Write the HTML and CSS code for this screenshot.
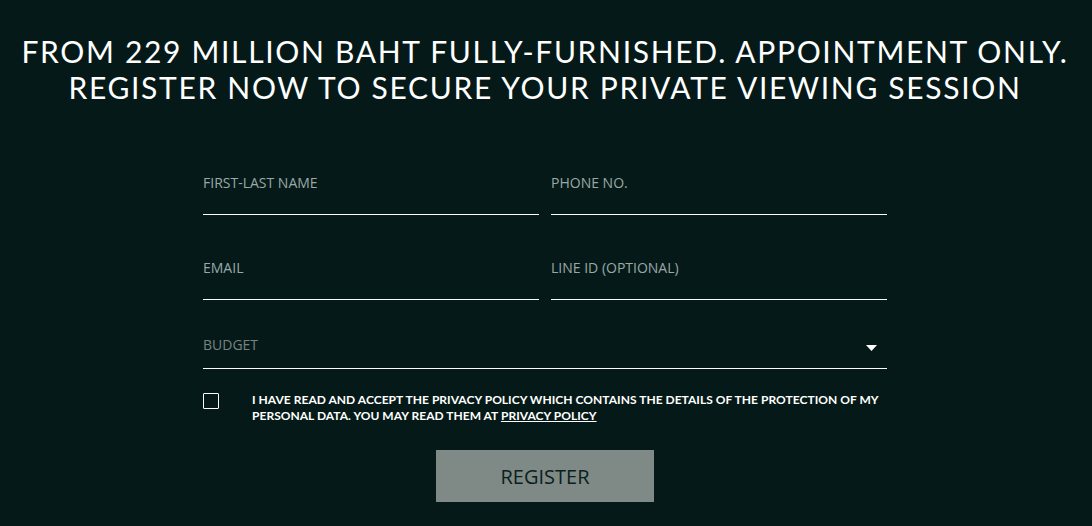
FILE: index.html
```html
<!DOCTYPE html>
<html lang="en">
<head>
<meta charset="utf-8">
<title>Register</title>
<link rel="stylesheet" href="styles.css">
</head>
<body>
<main class="page">
  <h1 class="headline"><span class="hl-line">FROM 229 MILLION BAHT FULLY-FURNISHED. APPOINTMENT ONLY.</span><span class="hl-line">REGISTER NOW TO SECURE YOUR PRIVATE VIEWING SESSION</span></h1>
  <form class="form">
    <div class="row two">
      <label class="field"><span class="label">FIRST-LAST NAME</span></label>
      <label class="field"><span class="label">PHONE NO.</span></label>
    </div>
    <div class="row two last">
      <label class="field"><span class="label">EMAIL</span></label>
      <label class="field"><span class="label">LINE ID (OPTIONAL)</span></label>
    </div>
    <div class="select">
      <span class="label dim">BUDGET</span>
      <svg class="caret" width="11" height="6" viewBox="0 0 11 6"><path d="M0 0H11L5.5 6Z" fill="#ffffff"/></svg>
    </div>
    <div class="consent">
      <span class="box"></span>
      <p class="consent-text"><span class="c-line">I HAVE READ AND ACCEPT THE PRIVACY POLICY WHICH CONTAINS THE DETAILS OF THE PROTECTION OF MY</span><span class="c-line">PERSONAL DATA. YOU MAY READ THEM AT <a href="#" class="link">PRIVACY POLICY</a></span></p>
    </div>
    <div class="actions">
      <button type="button" class="btn">REGISTER</button>
    </div>
  </form>
</main>
</body>
</html>
```
FILE: styles.css
```css
html, body {
  margin: 0;
  padding: 0;
  background: #051a18;
}
body {
  font-family: "Open Sans", "Liberation Sans", sans-serif;
  color: #ffffff;
  width: 1092px;
  height: 526px;
  overflow: hidden;
}
.page {
  width: 1090px;
  display: flex;
  flex-direction: column;
  align-items: center;
}
.headline {
  margin: 33px 0 0;
  font-family: Lato, "Open Sans", sans-serif;
  font-weight: 400;
  font-size: 30px;
  line-height: 36px;
  letter-spacing: 1.68px;
  text-align: center;
  color: #ffffff;
  white-space: nowrap;
  display: flex;
  flex-direction: column;
  align-items: center;
}
.hl-line {
  display: block;
}
.form {
  width: 684px;
  margin-top: 69px;
  display: flex;
  flex-direction: column;
}
.row.two {
  display: grid;
  grid-template-columns: 336px 336px;
  column-gap: 12px;
  margin-bottom: 44px;
}
.row.two.last {
  margin-bottom: 36px;
}
.field {
  display: block;
  height: 41px;
  border-bottom: 1px solid #ffffff;
  box-sizing: border-box;
}
.label {
  display: block;
  font-size: 14px;
  color: #9aa8a7;
  line-height: 18px;
}
.label.dim {
  color: #778381;
}
.select {
  display: flex;
  align-items: flex-start;
  justify-content: space-between;
  height: 33px;
  border-bottom: 1px solid #ffffff;
  box-sizing: border-box;
  padding-right: 10px;
}
.caret {
  margin-top: 9px;
}
.consent {
  display: flex;
  align-items: flex-start;
  margin-top: 23px;
}
.box {
  flex: none;
  width: 14px;
  height: 14px;
  border: 1px solid #ffffff;
  border-radius: 1px;
  margin-top: 1px;
}
.consent-text {
  margin: 0 0 0 33px;
  font-family: Lato, "Open Sans", sans-serif;
  font-size: 12px;
  line-height: 16px;
  font-weight: 700;
  color: #ffffff;
  letter-spacing: 0.03px;
  display: flex;
  flex-direction: column;
  white-space: nowrap;
}
.c-line {
  display: block;
}
.link {
  color: #ffffff;
  text-decoration: underline;
}
.actions {
  display: flex;
  justify-content: center;
  margin-top: 26px;
}
.btn {
  width: 218px;
  height: 52px;
  background: #7f8a86;
  border: none;
  color: #0c201d;
  font-family: "Open Sans", "Liberation Sans", sans-serif;
  font-size: 20px;
  letter-spacing: 0;
  padding: 0;
}
```
